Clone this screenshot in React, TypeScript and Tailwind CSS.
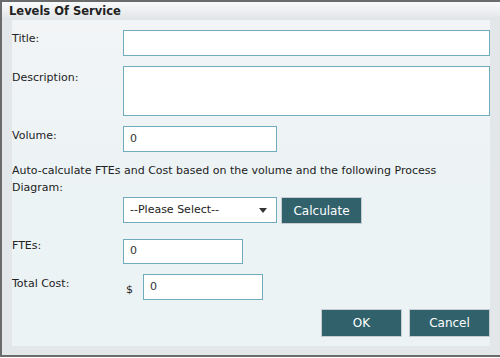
import React from "react";

const font = { fontFamily: '"DejaVu Sans", Verdana, sans-serif' };

function Field({ className = "", value = "" }: { className?: string; value?: string }) {
  return (
    <div className={`border border-[#70acbb] bg-white px-[6px] flex items-center text-[11px] text-[#333] ${className}`}>
      {value}
    </div>
  );
}

function Btn({ children, className = "" }: { children: React.ReactNode; className?: string }) {
  return (
    <button className={`bg-[#31626c] border border-[#c6cccf] text-white text-[12px] flex items-center justify-center ${className}`}>
      {children}
    </button>
  );
}

export default function App() {
  return (
    <div className="w-[500px] h-[358px] bg-white overflow-hidden" style={font}>
      <div className="h-[357px] w-[502px] border-2 border-[#6b6b6b] bg-[#e4e7ea] flex flex-col">
        <div className="h-[18px] bg-gradient-to-b from-[#f9fafb] to-[#e1e4e7] pl-[7px] text-[11.5px] font-bold text-[#222] leading-[19px]">
          Levels Of Service
        </div>
        <div className="ml-[10px] mr-[10px] h-[326px] bg-gradient-to-b from-[#f2f4f6] via-[#ecf3f5] to-[#ecf3f5] text-[11px] text-[#222] flex flex-col">
          <div className="flex mt-[10px]">
            <div className="w-[111px] pt-[1px] leading-[16px]">Title:</div>
            <Field className="w-[367px] h-[26px]" />
          </div>
          <div className="flex mt-[10px]">
            <div className="w-[111px] pt-[4px] leading-[16px]">Description:</div>
            <Field className="w-[367px] h-[50px]" />
          </div>
          <div className="flex mt-[10px]">
            <div className="w-[111px] pt-[2px] leading-[16px]">Volume:</div>
            <Field className="w-[154px] h-[26px]" value="0" />
          </div>
          <div className="mt-[10px] leading-[17px] pr-[40px]">
            Auto-calculate FTEs and Cost based on the volume and the following Process Diagram:
          </div>
          <div className="flex mt-[1px] ml-[111px] gap-[4px]">
            <div className="w-[154px] h-[26px] border border-[#70acbb] bg-white flex items-center justify-between pl-[6px] pr-[9px] text-[11px]">
              <span>--Please Select--</span>
              <svg width="8" height="5" viewBox="0 0 8 5">
                <path d="M0 0h8L4 5z" fill="#333" />
              </svg>
            </div>
            <Btn className="w-[81px] h-[27px]">Calculate</Btn>
          </div>
          <div className="flex mt-[15px]">
            <div className="w-[111px] leading-[16px] -mt-[1px]">FTEs:</div>
            <Field className="w-[120px] h-[25px]" value="0" />
          </div>
          <div className="flex mt-[10px]">
            <div className="w-[111px] pt-[2px] leading-[16px]">Total Cost:</div>
            <div className="w-[20px] pt-[8px] pl-[3px] leading-[16px]">$</div>
            <Field className="w-[120px] h-[26px]" value="0" />
          </div>
          <div className="flex justify-end gap-[7px] mt-[9px]">
            <Btn className="w-[81px] h-[28px]">OK</Btn>
            <Btn className="w-[81px] h-[28px]">Cancel</Btn>
          </div>
        </div>
      </div>
    </div>
  );
}
